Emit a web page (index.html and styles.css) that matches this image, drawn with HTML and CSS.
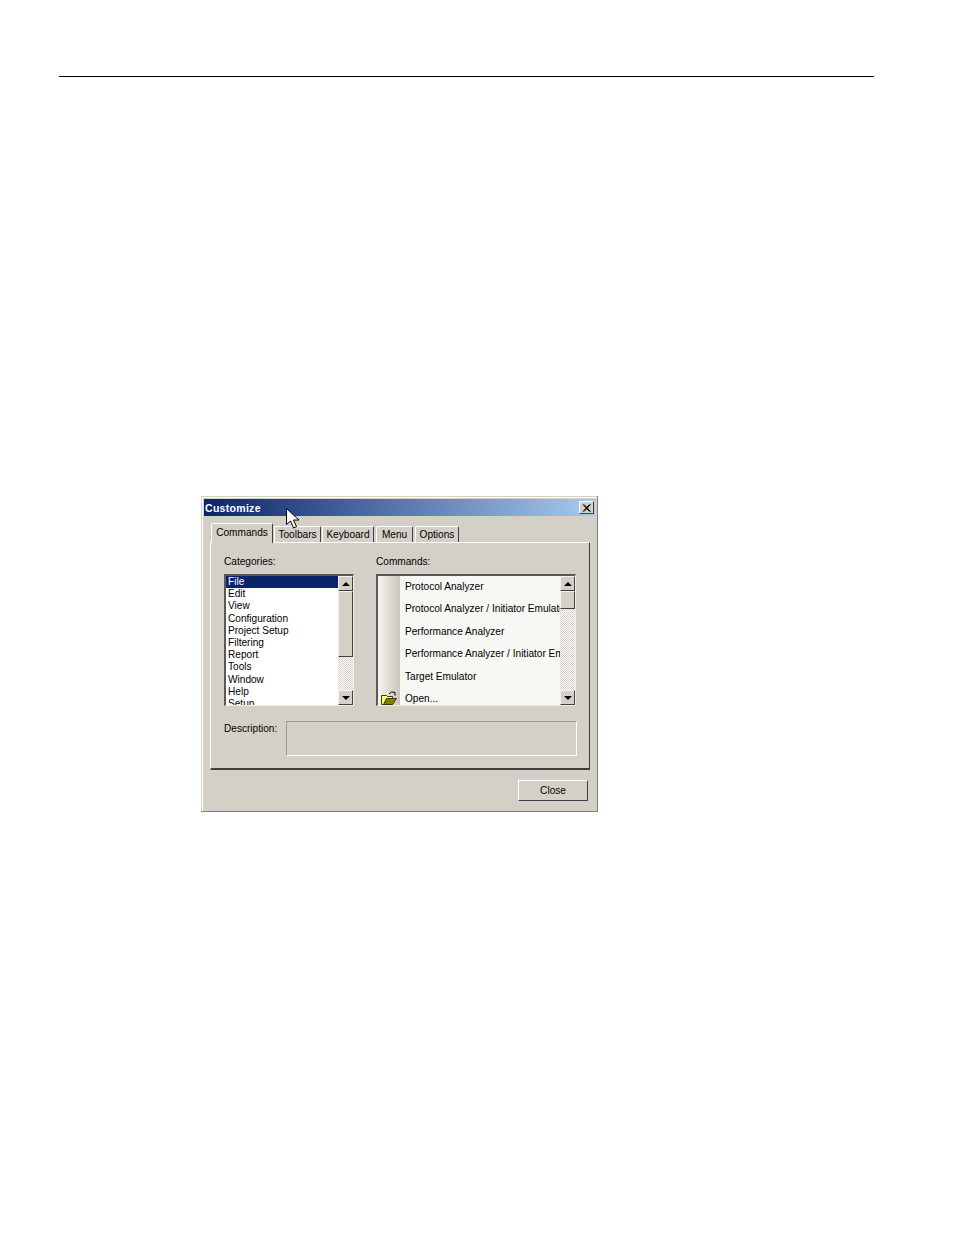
FILE: index.html
```
<!DOCTYPE html>
<html lang="en">
<head>
<meta charset="utf-8">
<title>Customize</title>
<link rel="stylesheet" href="styles.css">
</head>
<body>
<div class="page-rule"></div>
<div class="dialog">
  <div class="titlebar">
    <span class="title-text">Customize</span>
    <button class="title-close" aria-label="Close">
      <svg width="9" height="8" viewBox="0 0 9 8"><path d="M1 .5l6.500 7M2 .5l6.500 7M7.500 .5l-6.500 7M8.500 .5L2 7.500" fill="none" stroke="#000" stroke-width="1"/></svg>
    </button>
  </div>
  <svg class="cursor" width="14" height="21" viewBox="0 0 14 21"><path d="M.5.500v16l4-3.500 3 7 3-1.300-3-6.700h5.500z" fill="#fff" stroke="#000"/></svg>
  <div class="tabs">
    <div class="tab tab-active">Commands</div>
    <div class="tab tab-toolbars">Toolbars</div>
    <div class="tab tab-keyboard">Keyboard</div>
    <div class="tab tab-menu">Menu</div>
    <div class="tab tab-options">Options</div>
  </div>
  <div class="panel">
    <div class="columns">
      <div class="col-categories">
        <div class="label">Categories:</div>
        <div class="listbox">
          <ul class="cat-list">
            <li class="selected">File</li>
            <li>Edit</li>
            <li>View</li>
            <li>Configuration</li>
            <li>Project Setup</li>
            <li>Filtering</li>
            <li>Report</li>
            <li>Tools</li>
            <li>Window</li>
            <li>Help</li>
            <li>Setup</li>
          </ul>
          <div class="scrollbar">
            <div class="sb-btn"><span class="arrow-up"></span></div>
            <div class="sb-thumb thumb-cat"></div>
            <div class="sb-track"></div>
            <div class="sb-btn"><span class="arrow-down"></span></div>
          </div>
        </div>
      </div>
      <div class="col-commands">
        <div class="label">Commands:</div>
        <div class="listbox listbox-cmd">
          <ul class="cmd-list">
            <li><span class="cmd-icon"></span><span class="cmd-text">Protocol Analyzer</span></li>
            <li><span class="cmd-icon"></span><span class="cmd-text">Protocol Analyzer / Initiator Emulator</span></li>
            <li><span class="cmd-icon"></span><span class="cmd-text">Performance Analyzer</span></li>
            <li><span class="cmd-icon"></span><span class="cmd-text">Performance Analyzer / Initiator Emulator</span></li>
            <li><span class="cmd-icon"></span><span class="cmd-text">Target Emulator</span></li>
            <li><span class="cmd-icon">
              <svg width="16" height="14" viewBox="0 0 16 14"><path d="M.5 4.500h5l1 1h5v8H.5z" fill="#ffff66" stroke="#403c00"/><path d="M2.500 13.500l3-6h10l-4 6z" fill="#808000" stroke="#403c00"/><path d="M8 3q2.500-3.500 6-1.500v3" fill="none" stroke="#000"/></svg>
            </span><span class="cmd-text">Open...</span></li>
          </ul>
          <div class="scrollbar">
            <div class="sb-btn"><span class="arrow-up"></span></div>
            <div class="sb-thumb thumb-cmd"></div>
            <div class="sb-track"></div>
            <div class="sb-btn"><span class="arrow-down"></span></div>
          </div>
        </div>
      </div>
    </div>
    <div class="desc-row">
      <div class="desc-label">Description:</div>
      <div class="desc-box"></div>
    </div>
  </div>
  <div class="footer">
    <button class="close-btn">Close</button>
  </div>
</div>
</body>
</html>
```
FILE: styles.css
```
html, body {
  margin: 0;
  padding: 0;
  background: #fff;
}
body {
  width: 954px;
  height: 1235px;
  overflow: hidden;
  font-family: "Liberation Sans", Arial, sans-serif;
  font-size: 10.100px;
  color: #000;
}
.page-rule {
  height: 1px;
  width: 815px;
  margin: 76px 0 0 59px;
  background: #000;
}
.dialog {
  position: relative;
  box-sizing: border-box;
  width: 397px;
  height: 316px;
  margin: 419px 0 0 201px;
  padding: 3px;
  background: #d4d0c8;
  box-shadow: inset -1px -1px 0 #808080, inset 1px 1px 0 #d4d0c8, inset 2px 2px 0 #fff;
}
.titlebar {
  display: flex;
  align-items: center;
  justify-content: space-between;
  height: 17px;
  padding: 0 1px 0 1px;
  background: linear-gradient(90deg, #0a246a, #a6caf0);
}
.title-text {
  color: #fff;
  font-weight: bold;
  font-size: 10.500px;
  letter-spacing: .3px;
}
.title-close {
  display: flex;
  align-items: center;
  justify-content: center;
  width: 15px;
  height: 13px;
  padding: 0;
  background: #d4d0c8;
  border: 1px solid;
  border-color: #fff #404040 #404040 #fff;
}
.cursor {
  position: absolute;
  left: 85px;
  top: 12px;
}
.tabs {
  display: flex;
  align-items: flex-end;
  height: 19px;
  margin: 7px 0 0 6px;
}
.tab {
  box-sizing: border-box;
  height: 16px;
  padding: 2px 0 0;
  text-align: center;
  border-top: 1px solid #fff;
  border-left: 1px solid #fff;
  border-right: 1px solid #404040;
  border-radius: 2px 2px 0 0;
  white-space: nowrap;
}
.tab-active {
  position: relative;
  z-index: 1;
  width: 62px;
  height: 20px;
  margin: 0 0 -1px 1px;
  padding-top: 3px;
  background: #d4d0c8;
}
.tab-toolbars { width: 47px; margin-left: 1px; }
.tab-keyboard { width: 52px; margin-left: 1px; }
.tab-menu { width: 37px; margin-left: 2px; }
.tab-options { width: 44px; margin-left: 2px; }
.panel {
  box-sizing: border-box;
  width: 380px;
  height: 228px;
  margin-left: 6px;
  padding: 12px 10px 0 13px;
  border-top: 1px solid #fff;
  border-left: 1px solid #fff;
  border-right: 1px solid #404040;
  border-bottom: 2px solid #404040;
}
.columns {
  display: flex;
  gap: 22px;
}
.label {
  height: 13px;
  line-height: 13px;
  margin-bottom: 6px;
}
.listbox {
  display: flex;
  box-sizing: border-box;
  width: 130px;
  height: 132px;
  background: #fff;
  border-top: 2px solid #5a5a5a;
  border-left: 2px solid #5a5a5a;
  border-right: 1px solid #f0eee8;
  border-bottom: 1px solid #f0eee8;
  overflow: hidden;
}
.listbox-cmd {
  width: 200px;
  background: #f7f7f4;
}
.cat-list, .cmd-list {
  flex: 1;
  min-width: 0;
  margin: 0;
  padding: 0;
  list-style: none;
  overflow: hidden;
}
.cat-list li {
  height: 12.200px;
  line-height: 12.200px;
  padding-left: 2px;
  white-space: nowrap;
}
.cat-list li.selected {
  background: #0a246a;
  color: #fff;
}
.cmd-list {
  background: linear-gradient(90deg, #f4f4f0 0, #c9c5bb 22px, #f7f7f4 22px);
}
.cmd-list li {
  display: flex;
  align-items: center;
  height: 22.500px;
  white-space: nowrap;
}
.cmd-list li:first-child {
  margin-top: -1px;
}
.cmd-icon {
  display: flex;
  justify-content: center;
  align-items: flex-start;
  flex: none;
  width: 22px;
  height: 16px;
  margin-right: 5px;
}
.scrollbar {
  display: flex;
  flex-direction: column;
  flex: none;
  width: 15px;
  height: 100%;
}
.sb-btn, .sb-thumb {
  display: flex;
  align-items: center;
  justify-content: center;
  box-sizing: border-box;
  flex: none;
  background: #d4d0c8;
  border: 1px solid;
  border-color: #f4f2ee #404040 #404040 #f4f2ee;
}
.sb-btn { height: 15px; }
.thumb-cat { height: 66px; }
.thumb-cmd { height: 18px; }
.sb-track {
  flex: 1;
  background: repeating-conic-gradient(#d4d0c8 0 25%, #fff 0 50%) 0 0 / 2px 2px;
}
.arrow-up, .arrow-down {
  width: 0;
  height: 0;
  border-left: 4px solid transparent;
  border-right: 4px solid transparent;
}
.arrow-up { border-bottom: 4px solid #000; }
.arrow-down { border-top: 4px solid #000; }
.desc-row {
  display: flex;
  margin-top: 15px;
}
.desc-label {
  width: 62px;
  flex: none;
  height: 13px;
  margin-top: 1px;
  line-height: 13px;
}
.desc-box {
  flex: none;
  box-sizing: border-box;
  width: 291px;
  height: 35px;
  border: 1px solid;
  border-color: #a09d96 #fff #fff #a09d96;
}
.footer {
  display: flex;
  justify-content: flex-end;
  padding: 10px 7px 0 0;
}
.close-btn {
  box-sizing: border-box;
  width: 70px;
  height: 21px;
  padding: 0;
  background: #d4d0c8;
  border: 1px solid;
  border-color: #fff #404040 #404040 #fff;
  font: inherit;
  color: #000;
}
```
